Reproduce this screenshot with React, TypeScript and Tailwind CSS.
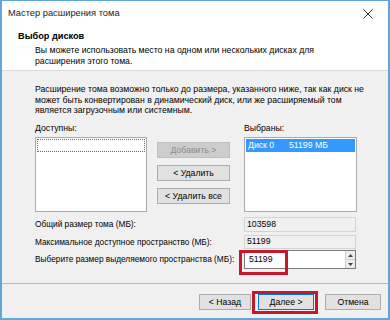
import React from "react";

const font = { fontFamily: '"Liberation Sans", Arial, sans-serif' };

function Btn({ children, disabled, primary, className = "" }: { children: React.ReactNode; disabled?: boolean; primary?: boolean; className?: string }) {
  const base = "h-[16px] flex items-center justify-center text-[8.7px] leading-none border whitespace-nowrap ";
  const style = disabled
    ? "bg-[#cccccc] border-[#bfbfbf] text-[#8c8c8c]"
    : primary
    ? "bg-[#e1e1e1] border-[#0078d7] text-black"
    : "bg-[#e1e1e1] border-[#adadad] text-black";
  return <div className={base + style + " " + className}>{children}</div>;
}

export default function App() {
  return (
    <div className="w-[390px] h-[320px] bg-white overflow-hidden" style={font}>
      <div className="w-full h-full flex flex-col border-l-2 border-r-2 border-b-2 border-t border-[#62a5d8]">
        {/* title */}
        <div className="h-[26px] shrink-0 flex items-center justify-between pl-[6px] pr-[15px] bg-white">
          <span className="text-[9.3px] text-[#222]">Мастер расширения тома</span>
          <svg width="10" height="10" viewBox="0 0 10 10">
            <path d="M0.5 0.5 L9.5 9.5 M9.5 0.5 L0.5 9.5" stroke="#333" strokeWidth="1" />
          </svg>
        </div>
        {/* header */}
        <div className="h-[43px] shrink-0 bg-white pl-[16px] pt-[3px]">
          <div className="text-[9.2px] leading-[12px] font-bold text-black">Выбор дисков</div>
          <div className="ml-[17px] mt-[3px] text-[8.7px] leading-[11px] text-black whitespace-nowrap">
            <div>Вы можете использовать место на одном или нескольких дисках для</div>
            <div>расширения этого тома.</div>
          </div>
        </div>
        {/* body */}
        <div className="flex-1 bg-[#f0f0f0] border-t border-[#d9d9d9] pl-[33px] pt-[13px] text-[8.7px] text-black whitespace-nowrap">
          <div className="leading-[10.5px]">
            <div>Расширение тома возможно только до размера, указанного ниже, так как диск не</div>
            <div>может быть конвертирован в динамический диск, или же расширяемый том</div>
            <div>является загрузочным или системным.</div>
          </div>
          <div className="flex mt-[7px]">
            <div className="w-[112px] shrink-0">
              <div className="leading-[11px]">Доступны:</div>
              <div className="mt-[3.5px] h-[75px] bg-white border border-[#a9a9a9] p-[1px]">
                <div className="h-[13px] border border-dotted border-[#666]"></div>
              </div>
            </div>
            <div className="w-[73px] shrink-0 ml-[10px] pt-[19.5px] flex flex-col gap-[7px]">
              <Btn disabled>Добавить &gt;</Btn>
              <Btn>&lt; Удалить</Btn>
              <Btn>&lt; Удалить все</Btn>
            </div>
            <div className="w-[113px] shrink-0 ml-[14px]">
              <div className="leading-[11px]">Выбраны:</div>
              <div className="mt-[3.5px] h-[75px] bg-white border border-[#a9a9a9] p-[1px]">
                <div className="h-[13px] bg-[#3399ff] text-white flex items-center pl-[2px]">
                  <span className="w-[41px]">Диск 0</span>
                  <span>51199 МБ</span>
                </div>
              </div>
            </div>
          </div>
          <div className="mt-[5px] flex flex-col text-[8.3px]">
            <div className="h-[15px] flex items-center">
              <span className="w-[209px] shrink-0">Общий размер тома (МБ):</span>
              <div className="w-[112px] h-[15px] border border-[#d4d4d4] bg-[#f0f0f0] flex items-center pl-[2px] text-[8.7px]">103598</div>
            </div>
            <div className="h-[16px] mt-[2px] flex items-center">
              <span className="w-[209px] shrink-0">Максимальное доступное пространство (МБ):</span>
              <div className="w-[112px] h-[14px] border border-[#d4d4d4] bg-[#f0f0f0] flex items-center pl-[2px] text-[8.7px]">51199</div>
            </div>
            <div className="h-[19px] flex items-center">
              <span className="w-[209px] shrink-0">Выберите размер выделяемого пространства (МБ):</span>
              <div className="relative w-[112px] h-[19px] border border-[#7a7a7a] bg-white flex items-center text-[8.7px]">
                <span className="pl-[4px] flex-1">51199</span>
                <div className="w-[10px] h-full flex flex-col border-l border-[#d0d0d0]">
                  <div className="flex-1 bg-[#ececec] border-b border-[#d0d0d0] flex items-center justify-center">
                    <svg width="5" height="3" viewBox="0 0 5 3"><path d="M0 3 L2.5 0 L5 3 Z" fill="#444" /></svg>
                  </div>
                  <div className="flex-1 bg-[#ececec] flex items-center justify-center">
                    <svg width="5" height="3" viewBox="0 0 5 3"><path d="M0 0 L2.5 3 L5 0 Z" fill="#444" /></svg>
                  </div>
                </div>
                <div className="absolute left-[-6px] top-[-1px] w-[49px] h-[25px] border-[3px] border-[#c8162c]"></div>
              </div>
            </div>
          </div>
        </div>
        {/* footer */}
        <div className="h-[35px] shrink-0 bg-[#f0f0f0] border-t border-[#b8b8b8] flex justify-end items-start pt-[10px] pr-[7px]">
          <Btn className="w-[52px]">&lt; Назад</Btn>
          <div className="relative ml-[7px]">
            <Btn primary className="w-[56px]">Далее &gt;</Btn>
            <div className="absolute left-[-6px] top-[-3px] w-[66px] h-[23px] border-[3px] border-[#c8162c]"></div>
          </div>
          <Btn className="w-[56px] ml-[11px]">Отмена</Btn>
        </div>
      </div>
    </div>
  );
}
